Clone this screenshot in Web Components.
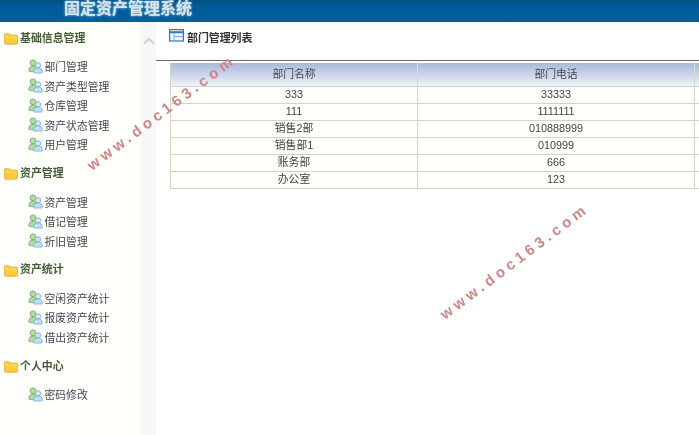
<!DOCTYPE html>
<html lang="zh"><head><meta charset="utf-8"><title>固定资产管理系统</title>
<style>
html,body{margin:0;height:100%;overflow:hidden;background:#fff}
body{font:11px "Liberation Sans","Noto Sans CJK SC",sans-serif;color:#333;filter:blur(.35px)}
</style></head><body>
<app-shell>
  <side-menu slot="side">
    <menu-group label="基础信息管理" chevron>
      <menu-item>部门管理</menu-item><menu-item>资产类型管理</menu-item><menu-item>仓库管理</menu-item><menu-item>资产状态管理</menu-item><menu-item>用户管理</menu-item>
    </menu-group>
    <menu-group label="资产管理">
      <menu-item>资产管理</menu-item><menu-item>借记管理</menu-item><menu-item>折旧管理</menu-item>
    </menu-group>
    <menu-group label="资产统计">
      <menu-item>空闲资产统计</menu-item><menu-item>报废资产统计</menu-item><menu-item>借出资产统计</menu-item>
    </menu-group>
    <menu-group label="个人中心">
      <menu-item>密码修改</menu-item>
    </menu-group>
  </side-menu>
  <dept-list slot="main"></dept-list>
</app-shell>
<script>
function def(name, html, init){
  customElements.define(name, class extends HTMLElement{
    constructor(){super();this.attachShadow({mode:'open'}).innerHTML=html}
    connectedCallback(){if(init)init.call(this)}
  });
}
const mark=(l,t)=>`<span class="mark" style="left:${l}px;top:${t}px">www.doc163.com</span>`;
def('app-shell',`<style>
:host{display:grid;grid-template-rows:22px 1fr;grid-template-columns:156px 1fr;width:699px;height:435px;position:relative;overflow:hidden;font-family:"Liberation Sans","Noto Sans CJK SC",sans-serif}
header{grid-column:1/3;background:linear-gradient(#03507f,#005a99 30%,#0060a0);padding:0 0 4px 64px;display:flex;align-items:center;box-sizing:border-box}
h1{margin:0;font-size:16px;line-height:18px;font-weight:700;color:#d3e4ee;text-shadow:0 0 3px #8fbcd8,0 0 1px #b8d4e6}
.mark{position:absolute;transform:rotate(-37deg);transform-origin:0 50%;font:700 15px "Liberation Sans",sans-serif;letter-spacing:4px;color:#d08686;white-space:nowrap;line-height:16px}
</style><header><h1>固定资产管理系统</h1></header><slot name="side"></slot><slot name="main"></slot>
${mark(89,159)}${mark(442,308)}`);
def('side-menu',`<style>
:host{display:block;background:linear-gradient(90deg,#fffffb 0,#fffffb 138px,#f6f8f8 142px,#f6f8f8 156px);padding-top:5px;min-height:0}
</style><slot></slot>`);
const folder=`<svg width="14" height="13" viewBox="0 0 14 13"><path d="M.5 3c0-1 .6-1.6 1.5-1.6h2.6c.8 0 1.2.9 1.8 1.6h5.8c.8 0 1.3.5 1.3 1.3v6.6c0 .8-.5 1.4-1.3 1.4H2c-.9 0-1.5-.6-1.5-1.4z" fill="#fbcb3e" stroke="#dca62c" stroke-width=".7"/><path d="M1 5h12" stroke="#ffe38a" stroke-width=".8"/></svg>`;
const chev=`<svg class="chev" width="14" height="10" viewBox="0 0 14 10"><path d="M2 7.5l5-4.5 5 4.5" fill="none" stroke="#cfd2d2" stroke-width="2.2"/></svg>`;
customElements.define('menu-group',class extends HTMLElement{
  constructor(){super();this.attachShadow({mode:'open'})}
  connectedCallback(){
    this.shadowRoot.innerHTML=`<style>
:host{display:block;margin-bottom:8.5px}
.h{height:19px;display:flex;align-items:center;gap:2px;padding-left:4px;font-weight:700;font-size:10.9px;color:#475c38;position:relative}
.h svg:first-child{margin-top:4px}
.chev{position:absolute;left:142px;top:9px}
.l{padding-top:10.4px}
</style><div class="h">${folder}<span>${this.getAttribute('label')}</span>${this.hasAttribute('chevron')?chev:''}</div><div class="l"><slot></slot></div>`;
  }
});
const user=`<svg width="15" height="15" viewBox="0 0 15 15"><circle cx="5" cy="3.8" r="2.9" fill="#b4dba0" stroke="#7cb074" stroke-width=".9"/><path d="M.8 12c0-3.4 1.6-4.9 4.2-4.9S8.5 8.5 8.5 11v1.6H1.6c-.5 0-.8-.2-.8-.6z" fill="#b0d99c" stroke="#7cb074" stroke-width=".9"/><circle cx="10" cy="6.4" r="2.7" fill="#cfe9fb" stroke="#7fb0d2" stroke-width=".9"/><path d="M5.6 13.2c0-2.9 1.7-4.2 4.4-4.2s4.3 1.3 4.3 4.2c0 .5-.3.8-.8.8H6.4c-.5 0-.8-.3-.8-.8z" fill="#bee0f7" stroke="#7fb0d2" stroke-width=".9"/></svg>`;
def('menu-item',`<style>
:host{display:flex;align-items:center;height:19.5px;padding-left:28px;gap:1.5px;color:#434952;font-size:10.8px;white-space:nowrap}
svg{flex:none}
</style>${user}<slot></slot>`);
const ticon=`<svg width="15" height="13" viewBox="0 0 15 13"><rect x=".6" y=".6" width="13.8" height="11.4" fill="#eef6fd" stroke="#2a78bd" stroke-width="1.2"/><path d="M1 3.2h13" stroke="#2a78bd" stroke-width="2"/><path d="M5 4v8M5 7.5h9" stroke="#6ea6d6" stroke-width=".9"/></svg>`;
const rows=[['333','33333'],['111','1111111'],['销售2部','010888999'],['销售部1','010999'],['账务部','666'],['办公室','123']];
def('dept-list',`<style>
:host{display:block;min-width:0;overflow:hidden}
.t{height:38px;display:flex;align-items:center;gap:3px;padding:0 0 10px 13px;font-weight:700;font-size:10.9px;color:#333;box-sizing:border-box}
.t svg{margin-top:-2px}
.t span{margin-top:1px}
.r{height:1px;background:#6b6b68}
.w{padding:2px 0 0 14px}
table{border-collapse:collapse;table-layout:fixed;width:529px;font-size:10.8px;color:#3f3f3f}
col.a{width:247px}col.b{width:277px}col.c{width:5px}
tr{height:17px}
tr:first-child{height:23px}
th{padding:0 0 2px;font-weight:400;color:#4a4a4a;background:linear-gradient(#a9b9d8,#c6d2e8 45%,#e6edf6 90%,#f2f6fa);border-right:1px solid #dcdfd0;text-align:center;box-sizing:border-box;height:23px}
td{padding:0;text-align:center;border:1px solid #d0d3c6;background:#fffffb;line-height:15px;box-sizing:border-box;height:17px}
tr td:first-child,tr th:first-child{border-left:1px solid #d0d3c6}
</style>
<div class="t">${ticon}<span>部门管理列表</span></div><div class="r"></div>
<div class="w"><table><colgroup><col class="a"><col class="b"><col class="c"></colgroup>
<tr><th>部门名称</th><th>部门电话</th><th></th></tr>
${rows.map(r=>`<tr><td>${r[0]}</td><td>${r[1]}</td><td></td></tr>`).join('')}
</table></div>`);
</script>
</body></html>
